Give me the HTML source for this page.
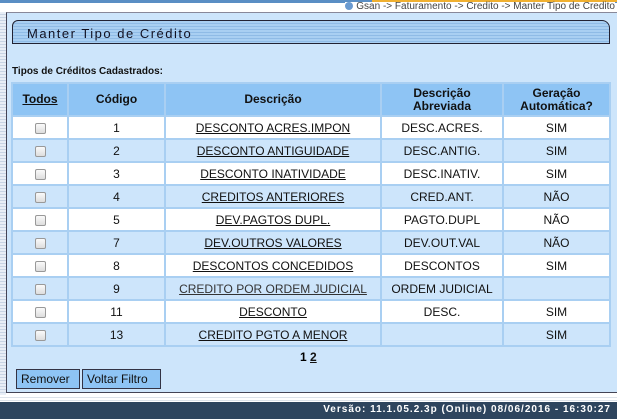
<!DOCTYPE html>
<html><head><meta charset="utf-8"><style>
*{margin:0;padding:0;box-sizing:border-box}
body{width:617px;height:419px;overflow:hidden;background:#fff;font-family:"Liberation Sans",Arial,sans-serif;position:relative}
.top{position:absolute;left:0;top:0;width:617px;height:3px;background:#5a8ec4}
.top2{position:absolute;left:372px;top:0;width:245px;height:2px;background:#f0b030}
.bc{position:absolute;right:2px;top:2px;font-size:10px;color:#444;height:10px;line-height:10px;background:#fff}
.bc i{display:inline-block;width:8px;height:8px;border-radius:50%;background:#6a9ad0;vertical-align:-1px;margin-right:3px}
.lstr{position:absolute;left:0;top:12px;width:6px;height:383px;background:repeating-linear-gradient(#e8eef6 0 2px,#c8d4e4 2px 3px)}
.panel{position:absolute;left:6px;top:12px;width:611px;height:381px;background:#cde5fb;border-left:1px solid #445;border-top:1px solid #889;border-bottom:1px solid #445}
.title{position:absolute;left:12px;top:20px;width:598px;height:24px;border:1px solid #223;border-radius:6px 8px 0 0;background:repeating-linear-gradient(#a9cff2 0 2px,#8fbbe6 2px 3px);font-size:13px;letter-spacing:1.5px;color:#112;padding:5px 0 0 14px}
.lbl{position:absolute;left:12px;top:66px;font-size:10px;font-weight:bold;color:#111}
table{position:absolute;left:11px;top:82px;width:600px;border-collapse:collapse;border-top:2px solid #111;font-size:12px;color:#111}
td,th{border:2px solid #a9cff2;text-align:center}
th{background:#8ec4f4;font-weight:bold;height:33px;line-height:13px}
td{height:23px}
tr.w td{background:#fff}
tr.b td{background:#cde5fb}
a{color:#111;text-decoration:underline}
.cb{display:inline-block;width:11px;height:11px;border:1px solid #999;border-radius:2px;background:linear-gradient(#fafafa,#ddd);vertical-align:middle}
.pg{position:absolute;left:300px;top:350px;font-size:12px;font-weight:bold}
.btn{position:absolute;top:369px;height:20px;background:#8ec4f4;border:1px solid #334;font-size:12px;line-height:18px;padding:0 4px;color:#111}
.foot{position:absolute;left:0;top:402px;width:617px;height:17px;background:#2e455e;color:#fff;font-size:10px;font-weight:bold;letter-spacing:1px;text-align:right;padding-right:6px;line-height:15px}
.fl{position:absolute;left:0;top:395px;width:617px;height:7px;background:repeating-linear-gradient(#fff 0 2px,#dde3ea 2px 3px)}
</style></head><body>
<div class="top"></div><div class="top2"></div>
<div class="bc"><i></i>Gsan -&gt; Faturamento -&gt; Credito -&gt; Manter Tipo de Credito</div>
<div class="lstr"></div>
<div class="panel"></div>
<div class="title">Manter Tipo de Crédito</div>
<div class="lbl">Tipos de Créditos Cadastrados:</div>
<table>
<tr><th style="width:56px"><a>Todos</a></th><th style="width:97px">Código</th><th style="width:216px">Descrição</th><th style="width:122px">Descrição<br>Abreviada</th><th>Geração<br>Automática?</th></tr>
<tr class="w"><td><span class="cb"></span></td><td>1</td><td><a>DESCONTO ACRES.IMPON</a></td><td>DESC.ACRES.</td><td>SIM</td></tr>
<tr class="b"><td><span class="cb"></span></td><td>2</td><td><a>DESCONTO ANTIGUIDADE</a></td><td>DESC.ANTIG.</td><td>SIM</td></tr>
<tr class="w"><td><span class="cb"></span></td><td>3</td><td><a>DESCONTO INATIVIDADE</a></td><td>DESC.INATIV.</td><td>SIM</td></tr>
<tr class="b"><td><span class="cb"></span></td><td>4</td><td><a>CREDITOS ANTERIORES</a></td><td>CRED.ANT.</td><td>NÃO</td></tr>
<tr class="w"><td><span class="cb"></span></td><td>5</td><td><a>DEV.PAGTOS DUPL.</a></td><td>PAGTO.DUPL</td><td>NÃO</td></tr>
<tr class="b"><td><span class="cb"></span></td><td>7</td><td><a>DEV.OUTROS VALORES</a></td><td>DEV.OUT.VAL</td><td>NÃO</td></tr>
<tr class="w"><td><span class="cb"></span></td><td>8</td><td><a>DESCONTOS CONCEDIDOS</a></td><td>DESCONTOS</td><td>SIM</td></tr>
<tr class="b"><td><span class="cb"></span></td><td>9</td><td><a style="color:#333">CREDITO POR ORDEM JUDICIAL</a></td><td>ORDEM JUDICIAL</td><td></td></tr>
<tr class="w"><td><span class="cb"></span></td><td>11</td><td><a>DESCONTO</a></td><td>DESC.</td><td>SIM</td></tr>
<tr class="b"><td><span class="cb"></span></td><td>13</td><td><a>CREDITO PGTO A MENOR</a></td><td></td><td>SIM</td></tr>
</table>
<div class="pg">1 <a>2</a></div>
<div class="btn" style="left:16px;width:64px">Remover</div>
<div class="btn" style="left:82px;width:79px">Voltar Filtro</div>
<div class="fl"></div>
<div class="foot">Versão: 11.1.05.2.3p (Online) 08/06/2016 - 16:30:27</div>
</body></html>
